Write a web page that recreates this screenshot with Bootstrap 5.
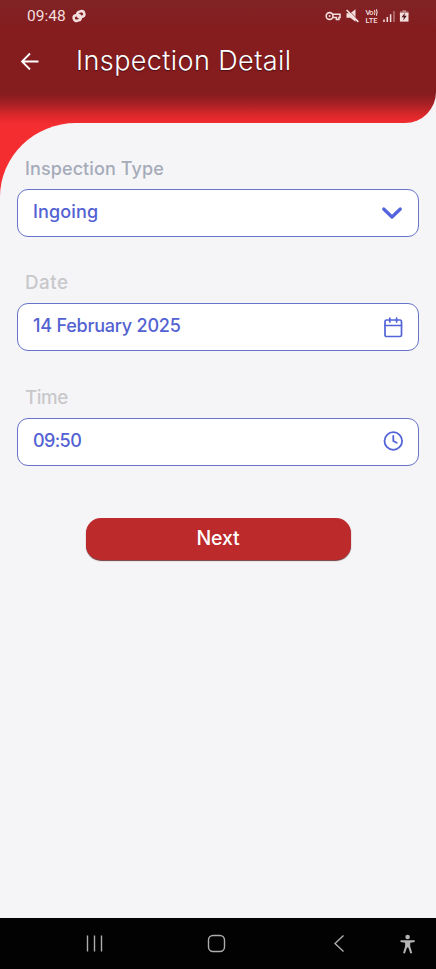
<!DOCTYPE html>
<html lang="en">
<head>
<meta charset="utf-8">
<meta name="viewport" content="width=device-width, initial-scale=1">
<title>Inspection Detail</title>
<link href="https://cdn.jsdelivr.net/npm/bootstrap@5.3.0/dist/css/bootstrap.min.css" rel="stylesheet">
<style>
body{background:#f5f5f8;font-family:Inter,"Open Sans",sans-serif;height:969px;overflow:hidden}
svg{display:block;flex:none}
.app-head{height:123px;border-radius:0 0 31px 0;background:linear-gradient(#812326 0,#851c1e 32px,#851c1e 94px,#a82024 104px,#da282b 115px,#f22c2f 123px);color:#fff}
.status{height:32px;padding-left:27px;padding-right:26px;color:#f3dede}
.clock{font:15.5px/32px Roboto,sans-serif;width:45px}
.bar-title{height:58px;padding-left:21px}
.bar-title h1{font-size:27px;font-weight:300;line-height:58px;margin-left:37px;letter-spacing:.41px;text-shadow:0 1px 1px #4a1015}
.corner{background:linear-gradient(#f42d30,#f42d30) no-repeat 0 0/90px 80px}
.sheet{background:#f5f5f8;border-top-left-radius:76px 74px;padding:33px 17px 0}
.field-label{font-size:18.8px;line-height:26px;margin:0 0 7px 8px;font-weight:500;color:#c8c8ca;letter-spacing:.5px}
.field-label.tinted{color:#a5abb8;letter-spacing:.1px;font-size:18px}
.field-label.compact{letter-spacing:-.5px}
.field-box{height:48px;margin-bottom:33.4px;border:1px solid #6673c8;border-radius:11px;background:#fff;color:#5362d2;padding:0 15px 3px;font-size:18px;font-weight:500;letter-spacing:-.22px}
.field-box .word{letter-spacing:.15px}
.field-box .hours{letter-spacing:-.6px}
.field-box svg{position:relative;top:1px}
.next{width:265px;height:42px;margin-top:52px;border-radius:15px;background:#bc2a2b;color:#fff;font-size:19.5px;font-weight:500;letter-spacing:-.1px;box-shadow:0 1px 1px #713b3e}
.next:hover{background:#bc2a2b;color:#fff}
.sysbar{height:51px;background:#020202;padding-left:86px;padding-right:20px}
</style>
<script src="https://cdn.jsdelivr.net/npm/bootstrap@5.3.0/dist/js/bootstrap.bundle.min.js"></script>
</head>
<body class="d-flex flex-column">
<header class="app-head flex-shrink-0">
  <div class="status d-flex align-items-center">
    <span class="clock">09:48</span>
    <svg width="14" height="14" viewBox="0 0 14 14" fill="none" stroke="currentColor" stroke-width="2.5"><rect x="5.3" y="2.3" width="7" height="5.6" rx="2.8" transform="rotate(-15 9 5)"/><rect x="1.7" y="6.1" width="7" height="5.6" rx="2.8" transform="rotate(-15 5 9)"/></svg>
    <svg class="ms-auto" width="85" height="16" viewBox="0 0 85 16" fill="none" stroke="currentColor">
      <circle cx="4.6" cy="8" r="3.4" stroke-width="1.6"/><circle cx="4.6" cy="8" r="1" fill="currentColor" stroke="none"/>
      <path d="M7.8 6.3H15v3.2h-1.1v2h-2.5v-2H7.8" stroke-width="1.5"/>
      <path d="M21.5 5.2h3.8l5.2-3.9v12.400l-5.200-3.900h-3.800z" fill="currentColor" stroke="none"/>
      <path d="m22.900 1.600 11 11" stroke="#841e20" stroke-width=".8"/><path d="M21.600 2 33.400 13.800" stroke-width="1.7"/>
      <g fill="currentColor" stroke="none" font-family="Roboto,sans-serif" font-weight="500"><text x="40.500" y="7.200" font-size="7.500" textLength="8">Vo</text><text x="40.500" y="15" font-size="8" textLength="12" lengthAdjust="spacingAndGlyphs">LTE</text></g>
      <path d="M49.400 2q1.200 2.500 0 5M51.400 1.300q1.600 3.200 0 6.400" stroke-width="1.1"/>
      <path d="M59 11.500V14M62.300 9v5M65.600 6.200V14" stroke-width="1.500"/><path d="M69 3v11" stroke-width="1.500" opacity=".45"/>
      <path d="M77.500 2.200h3.400v1.200h2.600v3h-8.600v-3h2.600z" fill="currentColor" stroke="none" opacity=".55"/><path d="M74.900 5h8.600v8.600h-8.600z" fill="currentColor" stroke="none"/><path d="m80 4.700-3.400 4.500h2.200l-.5 3.200 3.500-4.600h-2.300z" fill="#50191b" stroke="none"/>
    </svg>
  </div>
  <div class="bar-title d-flex align-items-center">
    <svg width="18" height="18" viewBox="0 0 18 18" fill="none" stroke="#fff" stroke-width="1.9"><path d="M17.500 9.500H2M9 1.500l-8 8 8 8"/></svg>
    <h1 class="mb-0">Inspection Detail</h1>
  </div>
</header>
<main class="corner flex-grow-1 d-flex">
  <div class="sheet flex-grow-1">
    <div class="field-label tinted">Inspection Type</div>
    <div class="field-box d-flex align-items-center justify-content-between"><span class="word">Ingoing</span>
      <svg width="22" height="22" viewBox="0 0 22 22" fill="none" stroke="#5264dc" stroke-width="3.2" stroke-linecap="round" stroke-linejoin="round"><path d="m2.700 7 8.300 8 8.300-8"/></svg></div>
    <div class="field-label">Date</div>
    <div class="field-box d-flex align-items-center justify-content-between"><span>14 February 2025</span>
      <svg width="20" height="22" viewBox="0 0 20 22" fill="none" stroke="#5264d8" stroke-width="1.7" stroke-linecap="round"><rect x="2" y="4" width="16.500" height="16.500" rx="1.500"/><path d="M2 9.500h16.500M6.800 2v4M13.600 2v4"/></svg></div>
    <div class="field-label compact">Time</div>
    <div class="field-box d-flex align-items-center justify-content-between mb-0"><span class="hours">09:50</span>
      <svg width="20" height="20" viewBox="0 0 20 20" fill="none" stroke="#5264d8" stroke-width="1.8" stroke-linecap="round"><circle cx="10.300" cy="10" r="8.800"/><path d="M10.300 4.800V10l3.400 1.800"/></svg></div>
    <button class="next btn border-0 d-block mx-auto p-0">Next</button>
  </div>
</main>
<footer class="sysbar flex-shrink-0 d-flex align-items-center">
  <svg width="330" height="22" viewBox="0 0 330 22" fill="none" stroke="#adadad" stroke-width="1.400">
    <path d="M1.500 2.500v16M8.500 2.500v16M15.500 2.500v16"/><rect x="122.500" y="2.500" width="16" height="16" rx="4.500"/><path d="m257.500 2.500-8.500 8 8.500 8"/>
    <g fill="#b5b5b5" stroke="none"><circle cx="321.600" cy="4" r="2.300"/><path d="M314.500 7.300h14.200v1.800l-4.500.7v3.500l2 6.800-1.800.4-2.100-6h-1.300l-2.100 6-1.800-.4 2-6.800V9.800l-4.600-.7z"/></g>
  </svg>
</footer>
</body>
</html>
